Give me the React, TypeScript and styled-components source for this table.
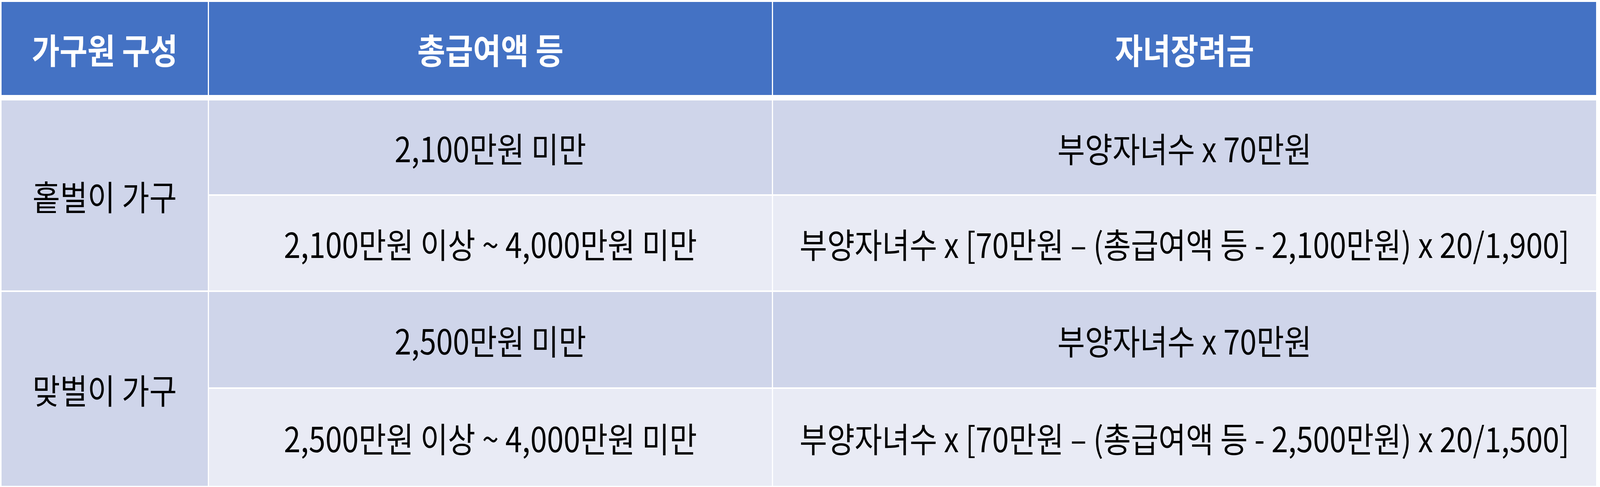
import styled, { createGlobalStyle } from "styled-components";
import type { CSSProperties } from "react";

// measurements are taken from the 4706x1246 reference and mapped onto the viewport
const ux = (n: number) => `${(n / 47.06).toFixed(4)}vw`;
const uy = (n: number) => `${(n / 12.46).toFixed(4)}vh`;

const GlobalStyle = createGlobalStyle`
  html, body {
    margin: 0;
    padding: 0;
    background: #ffffff;
    overflow: hidden;
  }
  body {
    font-family: "Noto Sans CJK KR", "Noto Sans", sans-serif;
  }
`;

interface BracketRow {
  income: string;
  amount: string;
}

interface Household {
  label: string;
  heights: [number, number];
  rows: BracketRow[];
}

const households: Household[] = [
  {
    label: "홑벌이 가구",
    heights: [240, 242],
    rows: [
      { income: "2,100만원 미만", amount: "부양자녀수 x 70만원" },
      {
        income: "2,100만원 이상 ~ 4,000만원 미만",
        amount: "부양자녀수 x [70만원 – (총급여액 등 - 2,100만원) x 20/1,900]",
      },
    ],
  },
  {
    label: "맞벌이 가구",
    heights: [244, 248],
    rows: [
      { income: "2,500만원 미만", amount: "부양자녀수 x 70만원" },
      {
        income: "2,500만원 이상 ~ 4,000만원 미만",
        amount: "부양자녀수 x [70만원 – (총급여액 등 - 2,500만원) x 20/1,500]",
      },
    ],
  },
];

const COLUMNS = `${ux(606)} ${ux(1655)} ${ux(2420)}`;

// glyphs are sized by width; stretch them back if the viewport aspect differs from the reference
function glyphStretch() {
  if (typeof window === "undefined") return 1;
  const k = window.innerHeight / 1246 / (window.innerWidth / 4706);
  return Number.isFinite(k) && k > 0 ? k : 1;
}

export default function App() {
  const vars = { "--ky": glyphStretch() } as CSSProperties;
  return (
    <>
      <GlobalStyle />
      <Table style={vars}>
        <HeaderRow>
          <HeadCell><Text>가구원 구성</Text></HeadCell>
          <HeadCell><Text>총급여액 등</Text></HeadCell>
          <HeadCell><Text>자녀장려금</Text></HeadCell>
        </HeaderRow>
        <Body>
          {households.map((h) => (
            <Group key={h.label} $heights={h.heights}>
              <LabelCell><Text>{h.label}</Text></LabelCell>
              {h.rows.map((r, ri) => (
                <Row key={ri}>
                  <Cell $band={ri % 2 === 0 ? "dark" : "light"}><Text>{r.income}</Text></Cell>
                  <Cell $band={ri % 2 === 0 ? "dark" : "light"}><Text>{r.amount}</Text></Cell>
                </Row>
              ))}
            </Group>
          ))}
        </Body>
      </Table>
    </>
  );
}

const Table = styled.div`
  display: flex;
  flex-direction: column;
  gap: ${uy(14)};
  padding: ${uy(5)} 0 0 ${ux(5)};
`;

const Text = styled.span`
  display: inline-block;
  white-space: nowrap;
  transform: scaleY(var(--ky, 1));
`;

const HeaderRow = styled.div`
  display: grid;
  grid-template-columns: ${COLUMNS};
  column-gap: ${ux(4)};
  height: ${uy(238)};
`;

const HeadCell = styled.div`
  display: flex;
  align-items: center;
  justify-content: center;
  background: #4472c4;
  color: #ffffff;
  font-size: ${ux(89)};
  font-weight: 700;
`;

const Body = styled.div`
  display: flex;
  flex-direction: column;
  gap: ${uy(4)};
`;

const Group = styled.div<{ $heights: [number, number] }>`
  display: grid;
  grid-template-columns: ${COLUMNS};
  grid-template-rows: ${(p) => `${uy(p.$heights[0])} ${uy(p.$heights[1])}`};
  column-gap: ${ux(4)};
  row-gap: ${uy(4)};
`;

const Row = styled.div`
  display: contents;
`;

const LabelCell = styled.div`
  grid-row: 1 / span 2;
  grid-column: 1;
  display: flex;
  align-items: center;
  justify-content: center;
  background: #cfd5ea;
  color: #000000;
  font-size: ${ux(88)};
`;

const Cell = styled.div<{ $band: "dark" | "light" }>`
  display: flex;
  align-items: center;
  justify-content: center;
  background: ${(p) => (p.$band === "dark" ? "#cfd5ea" : "#e9ebf5")};
  color: #000000;
  font-size: ${ux(88)};
`;
